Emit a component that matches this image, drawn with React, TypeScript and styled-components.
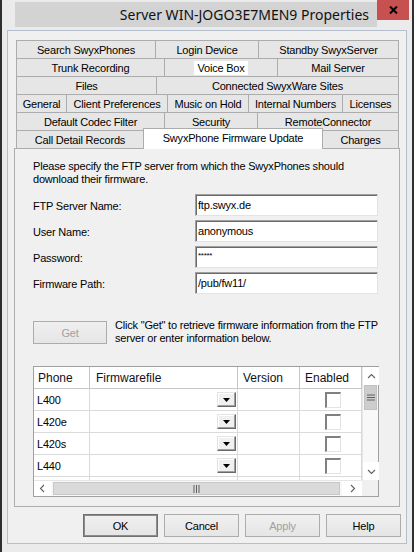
import React from 'react';
import styled, { createGlobalStyle, css } from 'styled-components';

const Global = createGlobalStyle`
  html, body { margin: 0; padding: 0; background: #ebebeb; }
  body { font-family: "Liberation Sans", Arial, sans-serif; font-size: 11px; letter-spacing: -0.2px; color: #000; }
  * { box-sizing: border-box; }
`;

const Window = styled.div`
  width: 414px;
  height: 552px;
  background: #ebebeb;
  border-left: 2px solid #2f2f2f;
  border-right: 2px solid #2f2f2f;
  display: flex;
  flex-direction: column;
`;

const TitleBar = styled.div`
  height: 30px;
  display: flex;
  align-items: flex-start;
`;

const TitleBox = styled.div`
  margin: 2px 0 0 13px;
  width: 362px;
  height: 25px;
  background: #d3d3d3;
  display: flex;
  align-items: center;
  justify-content: flex-end;
  padding-right: 8px;
  font-family: "Noto Sans", "Open Sans", sans-serif;
  font-size: 14px;
  letter-spacing: 0;
  color: #111;
`;

const CloseButton = styled.div`
  width: 32px;
  height: 20px;
  background: #c75050;
  display: flex;
  align-items: center;
  justify-content: center;
`;

const Client = styled.div`
  margin-left: 5px;
  width: 400px;
  height: 514px;
  border: 1px solid #b3bfcf;
  background: #f0f0f0;
  padding: 9px 5px 0 6px;
  display: flex;
  flex-direction: column;
`;

const TabStrip = styled.div`
  position: relative;
  z-index: 1;
  margin-left: 2px;
  width: 383px;
  display: flex;
  flex-direction: column;
`;

const TabRow = styled.div`
  display: flex;
  height: 19px;
  & + & { margin-top: -1px; }
`;

const Tab = styled.div<{ $w: number; $sel?: boolean }>`
  width: ${(p) => p.$w}px;
  flex: none;
  height: 19px;
  border: 1px solid #acacac;
  background: #e6e6e6;
  display: flex;
  align-items: center;
  justify-content: center;
  white-space: nowrap;
  font-size: 11px;
  & + & { margin-left: -1px; }
  ${(p) =>
    p.$sel &&
    css`
      position: relative;
      z-index: 2;
      margin-top: -2px;
      height: 21px;
      background: #fff;
      border-bottom: none;
      padding-bottom: 2px;
    `}
`;

const HotLabel = styled.span`
  background: #fff;
  padding: 1px 3px;
`;

const Panel = styled.div`
  margin-top: -1px;
  width: 386px;
  height: 359px;
  border: 1px solid #adadad;
  background: #f0f0f0;
  padding: 11px 0 0 18px;
  display: flex;
  flex-direction: column;
`;

const Intro = styled.p`
  margin: 0;
  line-height: 13px;
  width: 330px;
`;

const FormGrid = styled.div`
  margin-top: 8px;
  display: grid;
  grid-template-columns: 162px 183px;
  grid-auto-rows: 22px;
  row-gap: 4px;
  align-items: center;
`;

const Label = styled.label`
  padding-top: 1px;
`;

const TextInput = styled.div`
  height: 22px;
  background: #fff;
  border-top: 1px solid #a0a0a0;
  border-left: 1px solid #a0a0a0;
  border-right: 1px solid #e3e3e3;
  border-bottom: 1px solid #e3e3e3;
  box-shadow: inset 1px 1px 0 #696969;
  padding: 0 0 0 2px;
  display: flex;
  align-items: center;
  white-space: nowrap;
  font-size: 11px;
`;

const PasswordText = styled.span`
  font-size: 8px;
  letter-spacing: -0.3px;
  margin-top: -4px;
`;

const GetRow = styled.div`
  margin-top: 27px;
  display: flex;
  align-items: flex-start;
`;

const Button = styled.div<{ $disabled?: boolean; $default?: boolean }>`
  width: ${(p) => (p.$default !== undefined ? 75 : 74)}px;
  height: 23px;
  flex: none;
  border: 1px solid #acacac;
  background: linear-gradient(#f0f0f0, #e5e5e5);
  display: flex;
  align-items: center;
  justify-content: center;
  color: ${(p) => (p.$disabled ? '#a0a0a0' : '#000')};
  ${(p) =>
    p.$default &&
    css`
      border-color: #707070;
      box-shadow: inset 0 0 0 1px #8c8c8c;
    `}
`;

const GetHint = styled.p`
  margin: -2px 0 0 8px;
  line-height: 13px;
  width: 270px;
`;

const Table = styled.div`
  margin-top: 21px;
  width: 346px;
  height: 131px;
  border: 1px solid #a0a0a0;
  background: #fff;
  display: grid;
  grid-template-columns: 328px 16px;
  grid-template-rows: 113px 16px;
`;

const DataArea = styled.div`
  overflow: hidden;
  display: flex;
  flex-direction: column;
`;

const COLS = '56px 148px 62px 62px';

const HeadRow = styled.div`
  flex: none;
  display: grid;
  grid-template-columns: ${COLS};
  height: 22px;
  border-bottom: 1px solid #c6c6c6;
`;

const HeadCell = styled.div<{ $pad: number }>`
  display: flex;
  align-items: center;
  padding-left: ${(p) => p.$pad}px;
  border-right: 1px solid #c6c6c6;
  font-size: 12px;
  letter-spacing: 0;
  color: #101018;
`;

const BodyRow = styled.div`
  flex: none;
  display: grid;
  grid-template-columns: ${COLS};
  height: 22px;
  border-bottom: 1px solid #dadada;
`;

const Cell = styled.div<{ $center?: boolean }>`
  display: flex;
  align-items: center;
  justify-content: ${(p) => (p.$center ? 'center' : 'flex-start')};
  padding-left: ${(p) => (p.$center ? 4 : 3)}px;
  border-right: 1px solid #dadada;
  font-size: 11px;
`;

const ComboCell = styled(Cell)`
  justify-content: flex-end;
  padding-right: 1px;
`;

const DropButton = styled.div`
  width: 19px;
  height: 15px;
  background: #f0f0f0;
  border-top: 1px solid #e3e3e3;
  border-left: 1px solid #e3e3e3;
  border-right: 1px solid #696969;
  border-bottom: 1px solid #696969;
  box-shadow: inset -1px -1px 0 #a0a0a0, inset 1px 1px 0 #fff;
  display: flex;
  align-items: center;
  justify-content: center;
`;

const CheckBox = styled.div`
  width: 16px;
  height: 16px;
  margin-top: 1px;
  background: #fff;
  border-top: 2px solid #808080;
  border-left: 2px solid #808080;
  border-right: 1px solid #e3e3e3;
  border-bottom: 1px solid #e3e3e3;
`;

const VScroll = styled.div`
  border-left: 1px solid #e6e6e6;
  background: #f8f8f8;
  display: flex;
  flex-direction: column;
`;

const ScrollArrow = styled.div<{ $w?: number; $h?: number }>`
  flex: none;
  width: ${(p) => p.$w ?? 16}px;
  height: ${(p) => p.$h ?? 18}px;
  background: #fff;
  display: flex;
  align-items: center;
  justify-content: center;
`;

const VThumb = styled.div`
  flex: none;
  height: 25px;
  margin: 0 1px;
  background: #cdcdcd;
  border: 1px solid #c1c1c1;
  display: flex;
  align-items: center;
  justify-content: center;
`;

const Spacer = styled.div`
  flex: 1;
`;

const HScroll = styled.div`
  border-top: 1px solid #e6e6e6;
  background: #f8f8f8;
  display: flex;
`;

const HThumb = styled.div`
  flex: 1;
  margin: 1px 2px;
  background: #dadada;
  border: 1px solid #c8c8c8;
  display: flex;
  align-items: center;
  justify-content: center;
`;

const Corner = styled.div`
  background: #f0f0f0;
`;

const ButtonBar = styled.div`
  margin-top: 7px;
  display: flex;
  justify-content: flex-end;
  gap: 6px;
`;

const Chevron = ({ dir }: { dir: 'up' | 'down' | 'left' | 'right' }) => {
  const pts = {
    up: '1,6 4.5,2.5 8,6',
    down: '1,3 4.5,6.5 8,3',
    left: '6,1 2.5,4.5 6,8',
    right: '3,1 6.5,4.5 3,8',
  }[dir];
  return (
    <svg width="9" height="9" viewBox="0 0 9 9">
      <polyline points={pts} fill="none" stroke="#606060" strokeWidth="1.1" />
    </svg>
  );
};

const tabRows: { label: string; end: number; sel?: boolean; hot?: boolean }[][] = [
  [
    { label: 'Search SwyxPhones', end: 155 },
    { label: 'Login Device', end: 258 },
    { label: 'Standby SwyxServer', end: 398 },
  ],
  [
    { label: 'Trunk Recording', end: 164 },
    { label: 'Voice Box', end: 277, hot: true },
    { label: 'Mail Server', end: 398 },
  ],
  [
    { label: 'Files', end: 156 },
    { label: 'Connected SwyxWare Sites', end: 398 },
  ],
  [
    { label: 'General', end: 66 },
    { label: 'Client Preferences', end: 167 },
    { label: 'Music on Hold', end: 248 },
    { label: 'Internal Numbers', end: 342 },
    { label: 'Licenses', end: 398 },
  ],
  [
    { label: 'Default Codec Filter', end: 164 },
    { label: 'Security', end: 257 },
    { label: 'RemoteConnector', end: 398 },
  ],
  [
    { label: 'Call Detail Records', end: 143 },
    { label: 'SwyxPhone Firmware Update', end: 322, sel: true },
    { label: 'Charges', end: 398 },
  ],
];

const fields = [
  { label: 'FTP Server Name:', value: 'ftp.swyx.de' },
  { label: 'User Name:', value: 'anonymous' },
  { label: 'Password:', value: '*****', password: true },
  { label: 'Firmware Path:', value: '/pub/fw11/' },
];

const phones = ['L400', 'L420e', 'L420s', 'L440', ''];

export default function App() {
  return (
    <>
      <Global />
      <Window>
        <TitleBar>
          <TitleBox>Server WIN-JOGO3E7MEN9 Properties</TitleBox>
          <CloseButton>
            <svg width="9" height="8" viewBox="0 0 9 8">
              <path d="M1 0.5 L8 7.5 M8 0.5 L1 7.5" stroke="#000" strokeWidth="2" />
            </svg>
          </CloseButton>
        </TitleBar>
        <Client>
          <TabStrip>
            {tabRows.map((row, ri) => {
              let start = 16;
              return (
                <TabRow key={ri}>
                  {row.map((t) => {
                    const w = t.end - start + 1;
                    start = t.end;
                    return (
                      <Tab key={t.label} $w={w} $sel={t.sel}>
                        {t.hot ? <HotLabel>{t.label}</HotLabel> : t.label}
                      </Tab>
                    );
                  })}
                </TabRow>
              );
            })}
          </TabStrip>
          <Panel>
            <Intro>Please specify the FTP server from which the SwyxPhones should download their firmware.</Intro>
            <FormGrid>
              {fields.map((f) => (
                <React.Fragment key={f.label}>
                  <Label>{f.label}</Label>
                  <TextInput>{f.password ? <PasswordText>{f.value}</PasswordText> : f.value}</TextInput>
                </React.Fragment>
              ))}
            </FormGrid>
            <GetRow>
              <Button $disabled>Get</Button>
              <GetHint>Click "Get" to retrieve firmware information from the FTP server or enter information below.</GetHint>
            </GetRow>
            <Table>
              <DataArea>
                <HeadRow>
                  <HeadCell $pad={4}>Phone</HeadCell>
                  <HeadCell $pad={6}>Firmwarefile</HeadCell>
                  <HeadCell $pad={5}>Version</HeadCell>
                  <HeadCell $pad={5}>Enabled</HeadCell>
                </HeadRow>
                {phones.map((p, i) => (
                  <BodyRow key={i}>
                    <Cell>{p}</Cell>
                    <ComboCell>
                      <DropButton>
                        <svg width="7" height="4" viewBox="0 0 7 4">
                          <polygon points="0,0 7,0 3.5,4" fill="#000" />
                        </svg>
                      </DropButton>
                    </ComboCell>
                    <Cell />
                    <Cell $center>
                      <CheckBox />
                    </Cell>
                  </BodyRow>
                ))}
              </DataArea>
              <VScroll>
                <ScrollArrow>
                  <Chevron dir="up" />
                </ScrollArrow>
                <VThumb>
                  <svg width="8" height="7" viewBox="0 0 8 7">
                    <path d="M0 1 H8 M0 3.5 H8 M0 6 H8" stroke="#606060" strokeWidth="1" />
                  </svg>
                </VThumb>
                <Spacer />
                <ScrollArrow>
                  <Chevron dir="down" />
                </ScrollArrow>
              </VScroll>
              <HScroll>
                <ScrollArrow $w={17} $h={15}>
                  <Chevron dir="left" />
                </ScrollArrow>
                <HThumb>
                  <svg width="7" height="8" viewBox="0 0 7 8">
                    <path d="M1 0 V8 M3.5 0 V8 M6 0 V8" stroke="#606060" strokeWidth="1" />
                  </svg>
                </HThumb>
                <ScrollArrow $w={20} $h={15}>
                  <Chevron dir="right" />
                </ScrollArrow>
              </HScroll>
              <Corner />
            </Table>
          </Panel>
          <ButtonBar>
            <Button $default>OK</Button>
            <Button $default={false}>Cancel</Button>
            <Button $default={false} $disabled>
              Apply
            </Button>
            <Button $default={false}>Help</Button>
          </ButtonBar>
        </Client>
      </Window>
    </>
  );
}
